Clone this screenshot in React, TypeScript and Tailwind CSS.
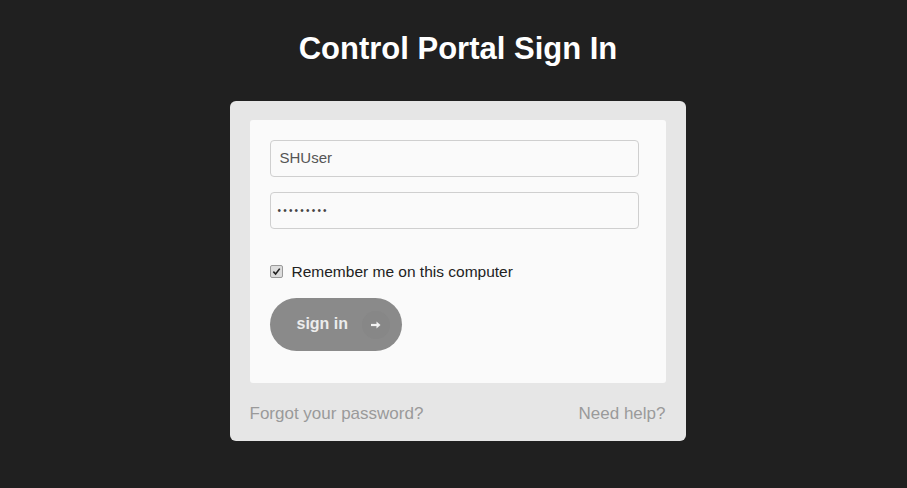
import React from "react";

export default function App() {
  return (
    <div
      className="w-full h-[488px] bg-[#202020] flex flex-col items-center overflow-hidden"
      style={{ fontFamily: '"Liberation Sans", Arial, sans-serif' }}
    >
      <h1 className="mt-[31px] text-[31px] leading-[36px] font-bold text-white ml-[9px]">
        Control Portal Sign In
      </h1>
      <div className="mt-[34px] ml-[8px] w-[456px] h-[340px] bg-[#e6e6e6] rounded-[6px] px-[20px] pt-[19px] flex flex-col">
        <div className="bg-[#fafafa] rounded-[3px] h-[263px] px-[20px] pt-[20px] flex flex-col">
          <div className="h-[37px] w-[369px] border border-[#cfcfcf] rounded-[4px] bg-[#fafafa] flex items-center px-[9px] text-[15px] text-[#555]">
            SHUser
          </div>
          <div className="mt-[15px] h-[37px] w-[369px] border border-[#cfcfcf] rounded-[4px] bg-[#fafafa] flex items-center px-[7px] text-[10px] text-[#444] tracking-[2.2px]">
            •••••••••
          </div>
          <div className="mt-[31px] flex items-center gap-[9px]">
            <div className="w-[13px] h-[13px] rounded-[2px] border border-[#9a9a9a] bg-[#dcdcdc] flex items-center justify-center">
              <svg width="9" height="9" viewBox="0 0 10 10">
                <path d="M1.5 5.2 L4 7.8 L8.6 1.8" stroke="#222" strokeWidth="1.8" fill="none" />
              </svg>
            </div>
            <span className="text-[15.5px] text-[#222]">Remember me on this computer</span>
          </div>
          <div className="mt-[15px] w-[132px] h-[53px] rounded-full bg-[#8a8a8a] flex items-center pl-[27px]">
            <span className="text-[16px] font-bold text-[#ececec] -mt-[1px]">sign in</span>
            <div className="ml-[14px] w-[28px] h-[28px] rounded-full bg-[#878787] flex items-center justify-center">
              <svg width="12" height="10" viewBox="0 0 12 10">
                <path d="M1 5 H8" stroke="#f2f2f2" strokeWidth="2.2" />
                <path d="M6.5 1.5 L10.5 5 L6.5 8.5 Z" fill="#f2f2f2" />
              </svg>
            </div>
          </div>
        </div>
        <div className="mt-[18px] flex items-center justify-between text-[17px] text-[#9a9a9a]">
          <span>Forgot your password?</span>
          <span>Need help?</span>
        </div>
      </div>
    </div>
  );
}
